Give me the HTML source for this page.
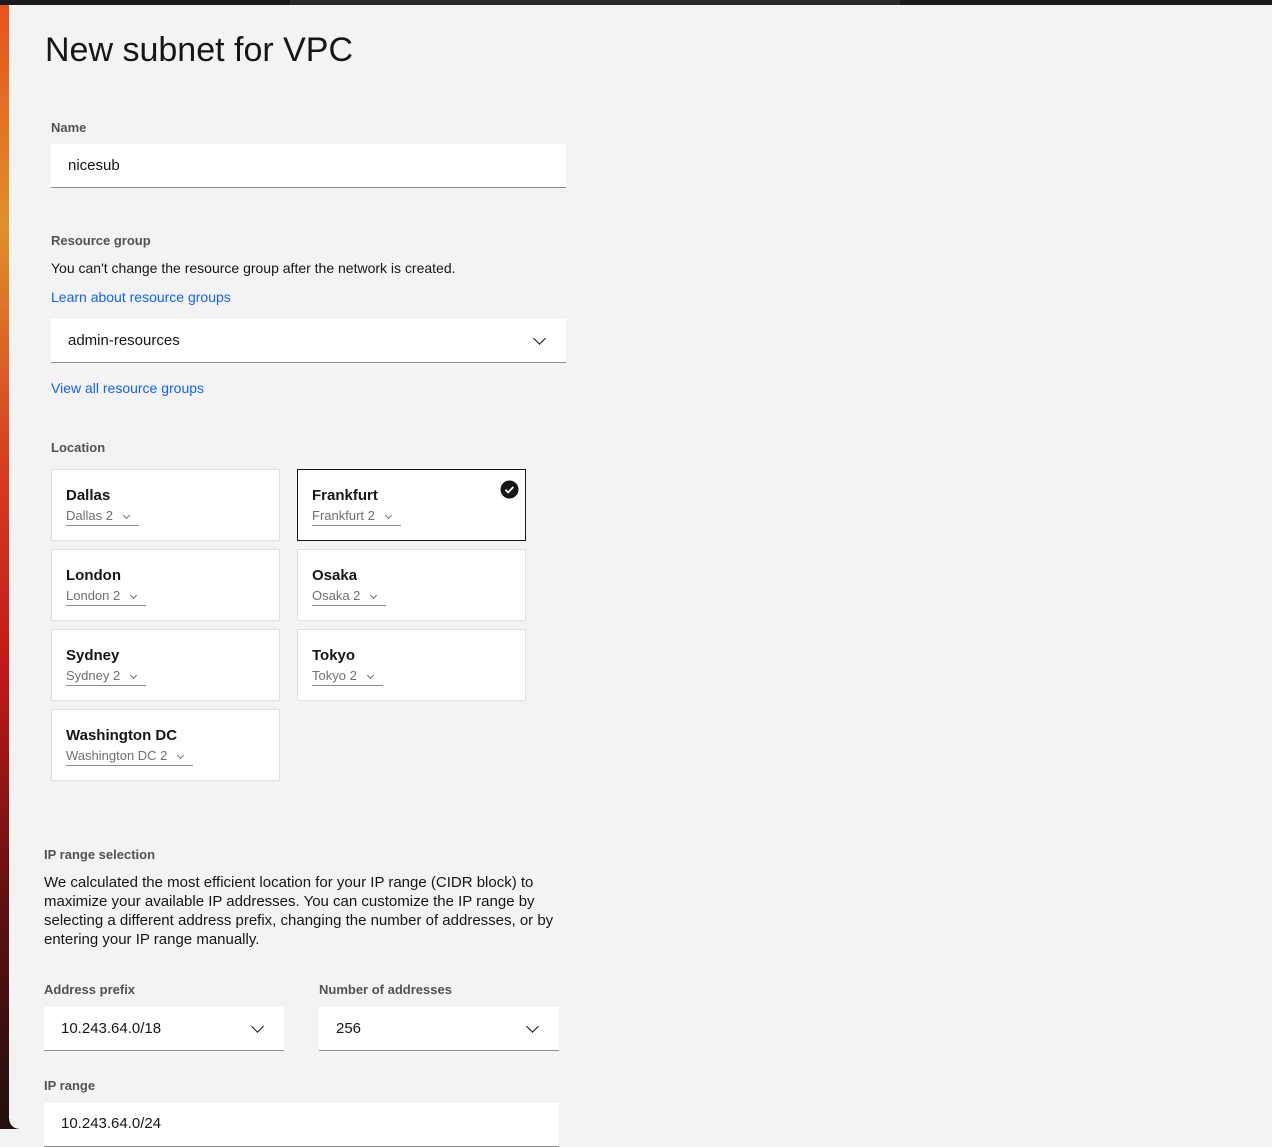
<!DOCTYPE html>
<html><head><style>
body{margin:0;width:1272px;height:1129px;overflow:hidden;background:#f3f3f3;font-family:"Liberation Sans",sans-serif;color:#161616;position:relative}
.strip{position:absolute;left:0;top:0;width:9px;height:1129px;background:linear-gradient(#e8501e 0%,#e0902a 20%,#d84020 40%,#c01818 60%,#601010 80%,#201010 100%)}
.corner{position:absolute;left:9px;bottom:0;width:10px;height:10px;background:radial-gradient(circle at 100% 0,#f3f3f3 9.5px,#201010 10px)}
.top{position:absolute;left:0;top:0;width:1272px;height:5px;background:#1a1a1a}
.top i{position:absolute;left:290px;width:610px;height:5px;background:#2a2a2a}
.a{position:absolute}
h1{position:absolute;left:45px;top:31px;margin:0;font-weight:400;font-size:34px;letter-spacing:0}
.lbl{font-size:13px;font-weight:700;color:#525252}
.inp{background:#fff;border-bottom:1px solid #8d8d8d;font-size:15px;box-sizing:border-box;padding-left:17px;display:flex;align-items:center}
.link{color:#0f62fe;font-size:14px}
.t{font-size:14px}
.tile{position:absolute;width:229px;height:72px;background:#fff;border:1px solid #e0e0e0;box-sizing:border-box}
.tile b{position:absolute;left:14px;top:17px;font-size:15px}
.tile span{position:absolute;left:14px;top:38px;font-size:13px;color:#6f6f6f;border-bottom:1px solid #8d8d8d;padding-bottom:2px;padding-right:26px}
.tile span:after{content:"";position:absolute;right:10px;top:5px;width:4px;height:4px;border-right:1px solid #6f6f6f;border-bottom:1px solid #6f6f6f;transform:rotate(45deg)}
.chev{position:absolute;right:22px;top:15px;width:8px;height:8px;border-right:1.5px solid #161616;border-bottom:1.5px solid #161616;transform:rotate(45deg)}
</style></head><body>
<div class="strip"></div><div class="corner"></div><div class="top"><i></i></div>
<h1>New subnet for VPC</h1>
<div class="a lbl" style="left:51px;top:120px">Name</div>
<div class="a inp" style="left:51px;top:144px;width:515px;height:44px">nicesub</div>
<div class="a lbl" style="left:51px;top:233px">Resource group</div>
<div class="a t" style="left:51px;top:260px">You can't change the resource group after the network is created.</div>
<div class="a link" style="left:51px;top:289px">Learn about resource groups</div>
<div class="a inp" style="left:51px;top:319px;width:515px;height:44px">admin-resources<div class="chev"></div></div>
<div class="a link" style="left:51px;top:380px">View all resource groups</div>
<div class="a lbl" style="left:51px;top:440px">Location</div>
<div class="tile" style="left:51px;top:469px"><b>Dallas</b><span>Dallas 2</span></div>
<div class="tile" style="left:297px;top:469px;border:1px solid #161616"><b>Frankfurt</b><span>Frankfurt 2</span>
<svg style="position:absolute;right:6px;top:10px" width="19" height="19" viewBox="0 0 19 19"><circle cx="9.5" cy="9.5" r="9" fill="#161616"/><path d="M5.5 9.8l2.6 2.6 5.2-5.4" stroke="#fff" stroke-width="1.8" fill="none"/></svg></div>
<div class="tile" style="left:51px;top:549px"><b>London</b><span>London 2</span></div>
<div class="tile" style="left:297px;top:549px"><b>Osaka</b><span>Osaka 2</span></div>
<div class="tile" style="left:51px;top:629px"><b>Sydney</b><span>Sydney 2</span></div>
<div class="tile" style="left:297px;top:629px"><b>Tokyo</b><span>Tokyo 2</span></div>
<div class="tile" style="left:51px;top:709px"><b>Washington DC</b><span>Washington DC 2</span></div>
<div class="a lbl" style="left:44px;top:847px">IP range selection</div>
<div class="a" style="left:44px;top:873px;width:512px;font-size:15px;line-height:19px">We calculated the most efficient location for your IP range (CIDR block) to maximize your available IP addresses. You can customize the IP range by selecting a different address prefix, changing the number of addresses, or by entering your IP range manually.</div>
<div class="a lbl" style="left:44px;top:982px">Address prefix</div>
<div class="a lbl" style="left:319px;top:982px">Number of addresses</div>
<div class="a inp" style="left:44px;top:1007px;width:240px;height:44px">10.243.64.0/18<div class="chev"></div></div>
<div class="a inp" style="left:319px;top:1007px;width:240px;height:44px">256<div class="chev"></div></div>
<div class="a lbl" style="left:44px;top:1078px">IP range</div>
<div class="a inp" style="left:44px;top:1103px;width:515px;height:44px;align-items:flex-start;padding-top:12px">10.243.64.0/24</div>
</body></html>
